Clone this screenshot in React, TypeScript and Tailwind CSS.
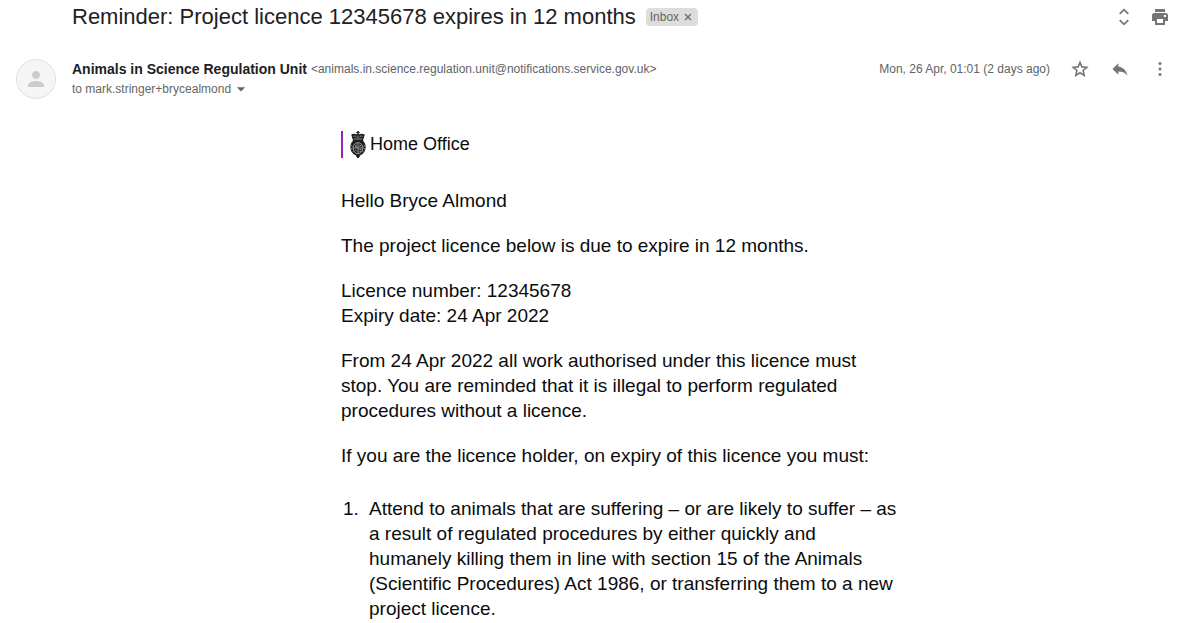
import type { ReactNode } from "react";
import { MdArrowDropDown, MdPerson, MdReply } from "react-icons/md";

function IconButton({ label, children }: { label: string; children: ReactNode }) {
  return (
    <button
      type="button"
      aria-label={label}
      className="flex size-5 items-center justify-center text-[#757575]"
    >
      {children}
    </button>
  );
}

function UnfoldIcon() {
  return (
    <svg viewBox="0 0 20 20" className="size-5" aria-hidden="true">
      <path
        d="M5.700 6.900L10 2.700l4.300 4.200M5.700 13.100l4.300 4.200 4.300-4.200"
        fill="none"
        stroke="currentColor"
        strokeWidth="1.700"
      />
    </svg>
  );
}

function PrintIcon() {
  return (
    <svg viewBox="0 0 20 20" className="size-5" aria-hidden="true" fill="currentColor">
      <path d="M5 2h10v3H5z" />
      <path
        fillRule="evenodd"
        d="M4.500 6h11A2.500 2.500 0 0 1 18 8.500V14h-3v4H5v-4H2V8.500A2.500 2.500 0 0 1 4.500 6zM7 12v4h6v-4zM14 8v2h2V8z"
      />
    </svg>
  );
}

function StarIcon() {
  return (
    <svg viewBox="0 0 20 20" className="size-5" aria-hidden="true">
      <path
        d="M10 3.300l1.900 4.600 4.900.4-3.700 3.200 1.100 4.900L10 13.800l-4.200 2.600 1.100-4.900-3.700-3.200 4.900-.4z"
        fill="none"
        stroke="currentColor"
        strokeWidth="1.600"
      />
    </svg>
  );
}

function MoreIcon() {
  return (
    <svg viewBox="0 0 20 20" className="size-5" aria-hidden="true" fill="currentColor">
      <circle cx="10" cy="4.500" r="1.500" />
      <circle cx="10" cy="10" r="1.500" />
      <circle cx="10" cy="15.500" r="1.500" />
    </svg>
  );
}

function Crest() {
  return (
    <svg viewBox="0 0 16 27" className="h-[27px] w-4" aria-hidden="true">
      <g fill="#1c1c1c">
        <path d="M7.300 0h1.400v1h1v1h-1v1H7.300V2h-1V1h1z" />
        <path d="M1.200 3.800c1.400-1.300 3.700-1.500 5.400-.6.800-.7 2-.7 2.800 0 1.700-.9 4-.7 5.400.6L13.400 8H2.600z" />
        <path d="M2.800 8h10.400v2.500H2.800z" />
        <path d="M3 10h10c2 1.600 2.800 4 2.600 7-.2 3.200-2 5.800-5.100 7.200L8 25l-2.500-.8C2.400 22.800.600 20.200.400 17 .200 14 1 11.600 3 10z" />
        <path d="M6 24.300h4v1.500H9V27H7v-1.200H6z" />
      </g>
      <g fill="none" stroke="#c9c9c9" strokeWidth=".7">
        <path d="M3.500 5.500c1-.9 2.300-.7 2.800.7M12.500 5.500c-1-.9-2.300-.7-2.800.7M3.800 8h8.400M8 4.500v2.500" />
        <path d="M8 11.600c-3 0-4.800 2.400-4.800 5.500S5 22.700 8 22.700s4.800-2.500 4.800-5.600S11 11.600 8 11.600z" />
        <path d="M8 12v10.300M3.500 17h9M5 14l1.800.4M5 15.700h2M9.500 13.700l1.500 1.600M9.400 15.800l1.600-1.700M5.200 18.700l1.500 1.700M9.500 18.600h2M9.400 20.300h1.700" />
        <path d="M1.200 14.500l1.300.8M.9 18l1.500-.5M2.500 21l1-.8M14.800 14.500l-1.300.8M15.100 18l-1.500-.5M13.500 21l-1-.8" />
      </g>
    </svg>
  );
}

export default function App() {
  return (
    <main className="min-h-screen bg-white font-['Liberation_Sans',Arial,sans-serif] text-[#202124]">
      <header className="flex items-start justify-between pt-[3px] pr-[10px] pl-[72px]">
        <div className="flex items-center gap-[10px]">
          <h1 className="text-[22px] leading-7">
            Reminder: Project licence 12345678 expires in 12 months
          </h1>
          <span className="flex h-[18px] items-center gap-[3px] rounded bg-[#ddd] px-1 text-xs text-[#666]">
            Inbox
            <button
              type="button"
              aria-label="Remove Inbox label"
              className="flex size-3 items-center justify-center"
            >
              <svg viewBox="0 0 12 12" className="size-3" aria-hidden="true">
                <path d="M3 3l6 6M9 3l-6 6" stroke="#666" strokeWidth="1.200" fill="none" />
              </svg>
            </button>
          </span>
        </div>
        <div className="flex gap-4 pt-1">
          <IconButton label="Expand all">
            <UnfoldIcon />
          </IconButton>
          <IconButton label="Print all">
            <PrintIcon />
          </IconButton>
        </div>
      </header>

      <section className="mt-7 flex items-start gap-4 pr-[10px] pl-4">
        <div className="flex size-10 shrink-0 items-center justify-center rounded-full border border-[#e0e0e0] bg-[#f5f5f5] text-[#ccc]">
          <MdPerson size={24} />
        </div>
        <div className="min-w-0 flex-1">
          <div className="flex items-center gap-1 leading-5">
            <h2 className="text-sm leading-5 font-bold">Animals in Science Regulation Unit</h2>
            <span className="text-xs leading-5 text-[#5f6368]">
              &lt;animals.in.science.regulation.unit@notifications.service.gov.uk&gt;
            </span>
          </div>
          <button type="button" className="flex items-center text-xs leading-5 text-[#666]">
            to mark.stringer+brycealmond
            <MdArrowDropDown size={20} />
          </button>
        </div>
        <div className="flex items-center gap-5">
          <time className="text-xs leading-5 text-[#5f6368]">Mon, 26 Apr, 01:01 (2 days ago)</time>
          <IconButton label="Star">
            <StarIcon />
          </IconButton>
          <IconButton label="Reply">
            <MdReply size={20} />
          </IconButton>
          <IconButton label="More">
            <MoreIcon />
          </IconButton>
        </div>
      </section>

      <article className="pt-8 pl-[72px] text-[19px] leading-[25px] text-[#0b0c0c]">
        <div className="mx-auto max-w-[570px] pr-3">
          <div className="flex h-[27px] items-center border-l-2 border-[#9325b2] pl-[7px]">
            <Crest />
            <span className="pl-1 text-lg leading-[25px]">Home Office</span>
          </div>
          <div className="mt-[30px] flex flex-col gap-5">
            <p>Hello Bryce Almond</p>
            <p>The project licence below is due to expire in 12 months.</p>
            <p>
              Licence number: 12345678
              <br />
              Expiry date: 24 Apr 2022
            </p>
            <p>
              From 24 Apr 2022 all work authorised under this licence must stop. You are reminded
              that it is illegal to perform regulated procedures without a licence.
            </p>
            <p>If you are the licence holder, on expiry of this licence you must:</p>
          </div>
          <ol className="mt-7 list-decimal pl-[23px]">
            <li className="pl-[5px]">
              Attend to animals that are suffering – or are likely to suffer – as a result of
              regulated procedures by either quickly and humanely killing them in line with section
              15 of the Animals (Scientific Procedures) Act 1986, or transferring them to a new
              project licence.
            </li>
          </ol>
        </div>
      </article>
    </main>
  );
}
